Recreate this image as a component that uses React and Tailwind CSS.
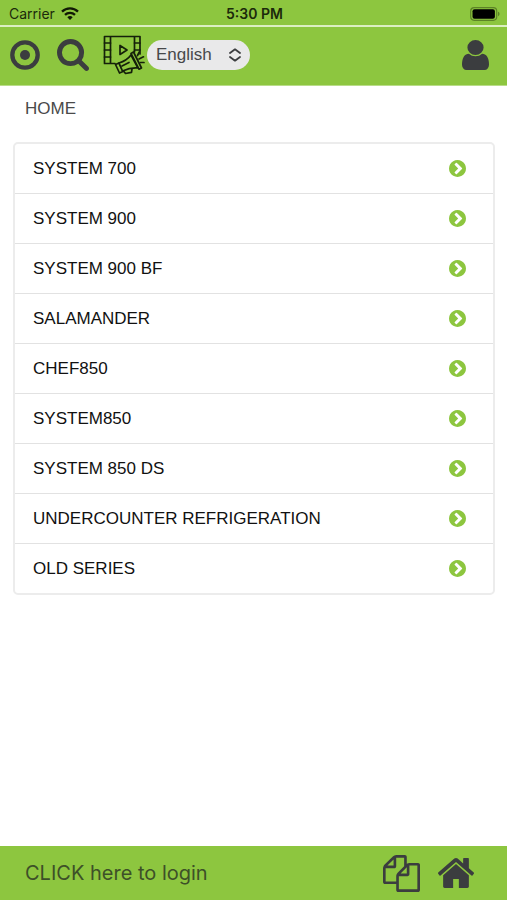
import React from "react";

const categories = [
  "SYSTEM 700",
  "SYSTEM 900",
  "SYSTEM 900 BF",
  "SALAMANDER",
  "CHEF850",
  "SYSTEM850",
  "SYSTEM 850 DS",
  "UNDERCOUNTER REFRIGERATION",
  "OLD SERIES",
];

function WifiIcon() {
  return (
    <svg viewBox="0 0 18 13" className="h-[13px] w-[18px]" fill="none" stroke="#111a05" strokeWidth="2.3" aria-hidden="true">
      <path d="M1 4.600a11.500 11.500 0 0 1 16 0" />
      <path d="M4 7.900a7.200 7.200 0 0 1 10 0" />
      <path d="M9 13l-2.700-2.800a3.900 3.900 0 0 1 5.400 0z" fill="#111a05" stroke="none" />
    </svg>
  );
}

function BatteryIcon() {
  return (
    <svg viewBox="0 0 30 14" className="h-[14px] w-[30px]" aria-hidden="true">
      <rect x="0.700" y="0.700" width="26" height="12.600" rx="3.500" fill="none" stroke="#5c8327" strokeWidth="1.200" />
      <rect x="2.500" y="2.300" width="22.400" height="9.400" rx="2" fill="#000" />
      <path d="M28 4.800c2 .6 2 3.800 0 4.400z" fill="#5c8327" />
    </svg>
  );
}

function TargetIcon() {
  return (
    <svg viewBox="0 0 30 30" className="h-[30px] w-[30px]" aria-hidden="true">
      <circle cx="15" cy="15" r="12.700" fill="none" stroke="currentColor" strokeWidth="4.300" />
      <circle cx="15" cy="15" r="5" fill="currentColor" />
    </svg>
  );
}

function SearchIcon() {
  return (
    <svg viewBox="0 128 1664 1664" className="h-[32px] w-[32px]" fill="currentColor" aria-hidden="true">
      <path d="M1152 832q0-185-131.500-316.500T704 384 387.500 515.500 256 832t131.500 316.500T704 1280t316.500-131.500T1152 832zm512 832q0 52-38 90t-90 38q-54 0-90-38l-343-342q-179 124-399 124-143 0-273.500-55.500t-225-150-150-225T0 832t55.500-273.500 150-225 225-150T704 128t273.500 55.500 225 150 150 225T1408 832q0 220-124 399l343 343q37 37 37 90z" />
    </svg>
  );
}

function PromoVideoIcon() {
  return (
    <svg viewBox="0 0 42 40" className="h-[40px] w-[42px]" fill="none" stroke="#15200a" strokeWidth="1.700" strokeLinejoin="round" strokeLinecap="round" aria-hidden="true">
      <path d="M12 28.500H1.500V1.500H37V19M7.500 1.500V28.500M31.500 1.500V17" />
      <path d="M1.500 8H7.500M1.500 15H7.500M1.500 22H7.500M31.500 8H37M31.500 15H37" />
      <path d="M17 10.500v9l7-4.500z" />
      <path d="M12.500 29.500l3.500-1.500 4 8.500-3.500 1.500z" fill="#8dc63f" />
      <path d="M16 28c5-1.500 9-4 12-8l7 13c-5-.5-10 .5-15.500 3z" fill="#8dc63f" />
      <path d="M28 18.500l2.500-1.500 8 16-2.500 1.200z" fill="#8dc63f" />
      <path d="M20.500 36l2 2.500 6-1.200.5-3.300M19 31l7-3.500" />
      <path d="M34.500 20.500l1.800-3.500M36 24l4.500-2.200M37.500 27.500h3.500" />
    </svg>
  );
}

function UserIcon() {
  return (
    <svg viewBox="0 128 1280 1536" className="h-[30px] w-[27px]" preserveAspectRatio="none" fill="currentColor" aria-hidden="true">
      <path d="M1280 1399q0 109-62.500 187t-150.500 78H213q-88 0-150.500-78T0 1399q0-85 8.500-160.500t31.500-152 58.500-131 94-89T327 832q131 128 313 128t313-128q76 0 134.500 34.500t94 89 58.500 131 31.500 152 8.500 160.500zm-256-887q0 159-112.500 271.500T640 896 368.500 783.500 256 512t112.500-271.500T640 128t271.500 112.500T1024 512z" />
    </svg>
  );
}

function ChevronCircleIcon() {
  return (
    <svg viewBox="0 128 1536 1536" className="h-[17px] w-[17px] shrink-0 text-[#8dc63f]" fill="currentColor" aria-hidden="true">
      <path d="M717 1395l454-454q19-19 19-45t-19-45L717 397q-19-19-45-19t-45 19L525 499q-19 19-19 45t19 45l307 307-307 307q-19 19-19 45t19 45l102 102q19 19 45 19t45-19zM1536 896q0 209-103 385.500T1153.500 1561 768 1664t-385.500-103T103 1281.500 0 896t103-385.500T382.500 231 768 128t385.500 103T1433 510.500 1536 896z" />
    </svg>
  );
}

function FilesIcon() {
  return (
    <svg viewBox="0 0 1792 1792" className="h-[37px] w-[37px]" fill="currentColor" aria-hidden="true">
      <path d="M1696 384q40 0 68 28t28 68v1216q0 40-28 68t-68 28H736q-40 0-68-28t-28-68v-288H96q-40 0-68-28t-28-68V640q0-40 20-88t48-76L476 68q28-28 76-48T640 0h416q40 0 68 28t28 68v328q68-40 128-40h416zm-544 213L853 896h299V597zM512 213L213 512h299V213zm196 647l316-316V128H640v416q0 40-28 68t-68 28H128v640h512v-256q0-40 20-88t48-76zm956 804V512h-384v416q0 40-28 68t-68 28H768v640h896z" />
    </svg>
  );
}

function HomeIcon() {
  return (
    <svg viewBox="26 253 1612 1283" className="h-[30px] w-[36px]" preserveAspectRatio="none" fill="currentColor" aria-hidden="true">
      <path d="M1408 992v480q0 26-19 45t-45 19H960v-384H704v384H320q-26 0-45-19t-19-45V992q0-1 .5-3t.5-3l575-474 575 474q1 2 1 6zm223-69l-62 74q-8 9-21 11h-3q-13 0-21-7L832 424 140 1001q-12 8-24 7-13-2-21-11l-62-74q-8-10-7-23.500T37 878L756 279q32-26 76-26t76 26l244 204V288q0-14 9-23t23-9h192q14 0 23 9t9 23v408l219 182q10 8 11 21.500t-7 23.500z" />
    </svg>
  );
}

function StatusBar() {
  return (
    <div className="grid h-[25px] grid-cols-3 items-center bg-[#8dc63f] pt-[2px] pr-[7px] pl-[9px] font-[Inter,sans-serif] text-[14px] leading-4 text-[#1c2a0b]">
      <div className="flex items-center gap-[6px]">
        <span>Carrier</span>
        <WifiIcon />
      </div>
      <div className="text-center font-semibold">5:30 PM</div>
      <div className="flex justify-end">
        <BatteryIcon />
      </div>
    </div>
  );
}

function Header() {
  return (
    <header className="flex h-[61px] items-center border-t-2 border-b border-t-[#dcefc2] border-b-[#b9dc88] bg-[#8dc63f] pr-[18px] pb-[3px] pl-[10px] text-[#3b3d3f]">
      <button type="button" aria-label="Target">
        <TargetIcon />
      </button>
      <button type="button" aria-label="Search" className="ml-[17px]">
        <SearchIcon />
      </button>
      <button type="button" aria-label="Promotional videos" className="ml-[14px]">
        <PromoVideoIcon />
      </button>
      <div className="relative ml-[2px]">
        <select
          aria-label="Language"
          defaultValue="English"
          className="block h-[30px] w-[103px] appearance-none rounded-full bg-[#e9e9ea] pr-7 pl-[9px] font-['Liberation_Sans',Arial,sans-serif] text-[17px] leading-5 text-[#47484a]"
        >
          <option>English</option>
        </select>
        <svg viewBox="0 0 12 14" className="pointer-events-none absolute top-2 right-[9px] h-[14px] w-[12px]" fill="none" stroke="#3b3d3f" strokeWidth="1.800" strokeLinecap="round" strokeLinejoin="round" aria-hidden="true">
          <path d="M1 5L6 1.300 11 5M1 9L6 12.700 11 9" />
        </svg>
      </div>
      <button type="button" aria-label="Account" className="ml-auto">
        <UserIcon />
      </button>
    </header>
  );
}

export default function App() {
  return (
    <div className="flex min-h-screen flex-col bg-white font-['Liberation_Sans',Arial,sans-serif] text-[17px] leading-6">
      <StatusBar />
      <Header />
      <main className="flex-1 pr-3 pb-6 pl-[13px]">
        <nav aria-label="Breadcrumb" className="px-3 pt-[11px] pb-[21px]">
          <a href="#home" className="text-[#4a4a4a]">HOME</a>
        </nav>
        <ul className="divide-y divide-[#e2e2e2] rounded-[5px] border-2 border-[#ececec]">
          {categories.map((name) => (
            <li key={name}>
              <a href="#category" className="flex h-[49px] items-center justify-between pr-[27px] pl-[18px] text-[#111]">
                <span>{name}</span>
                <ChevronCircleIcon />
              </a>
            </li>
          ))}
        </ul>
      </main>
      <footer className="flex h-[54px] items-center bg-[#8dc63f] pr-[33px] pl-[25px] text-[#3b3d3f]">
        <a href="#login" className="mr-auto font-[Inter,sans-serif] text-[20px] text-[#3d5028]">
          CLICK here to login
        </a>
        <button type="button" aria-label="Documents" className="mr-[18px]">
          <FilesIcon />
        </button>
        <button type="button" aria-label="Home">
          <HomeIcon />
        </button>
      </footer>
    </div>
  );
}
